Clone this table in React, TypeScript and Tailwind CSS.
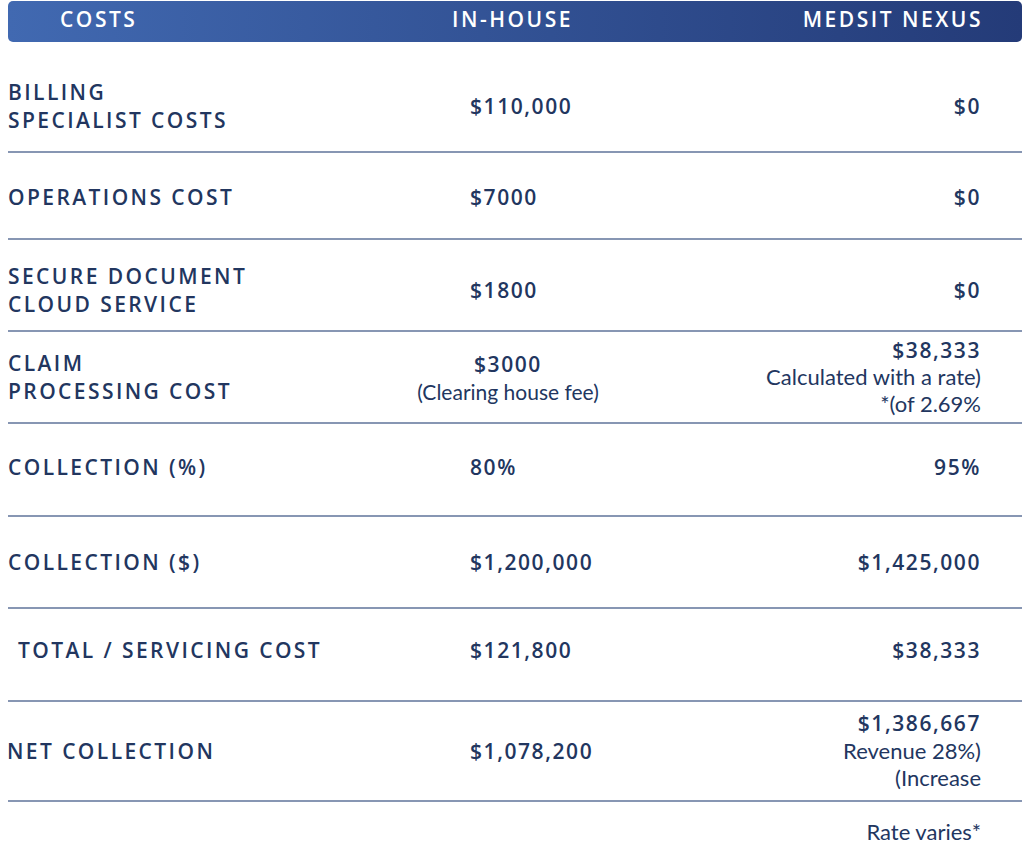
import React from 'react';

const navy = 'text-[#22365f]';

type Row = {
  label: React.ReactNode;
  inHouse: React.ReactNode;
  nexus: React.ReactNode;
  h: string;
};

const Label: React.FC<{ children: React.ReactNode; className?: string }> = ({ children, className = '' }) => (
  <div className={`font-['Open_Sans',sans-serif] text-[21px] font-semibold tracking-[0.115em] leading-[28px] ${navy} ${className}`}>
    {children}
  </div>
);

const Value: React.FC<{ children: React.ReactNode; className?: string }> = ({ children, className = 'leading-[28px]' }) => (
  <div className={`font-['Open_Sans',sans-serif] text-[21px] font-semibold tracking-[0.075em] ${className} ${navy}`}>
    {children}
  </div>
);

const Note: React.FC<{ children: React.ReactNode }> = ({ children }) => (
  <div className={`font-['Lato',sans-serif] text-[22px] leading-[27px] ${navy}`}>{children}</div>
);

const rows: Row[] = [
  {
    label: <Label>BILLING<br />SPECIALIST COSTS</Label>,
    inHouse: <Value>$110,000</Value>,
    nexus: <Value>$0</Value>,
    h: 'h-[111px] pt-[19px]',
  },
  {
    label: <Label>OPERATIONS COST</Label>,
    inHouse: <Value>$7000</Value>,
    nexus: <Value>$0</Value>,
    h: 'h-[87px] pt-[2px]',
  },
  {
    label: <Label>SECURE DOCUMENT<br />CLOUD SERVICE</Label>,
    inHouse: <Value>$1800</Value>,
    nexus: <Value>$0</Value>,
    h: 'h-[92px] pt-[9px]',
  },
  {
    label: <Label>CLAIM<br />PROCESSING COST</Label>,
    inHouse: (
      <div className="-ml-[62px] w-[200px] flex flex-col items-center pt-[2px]">
        <Value className="leading-[27px]">$3000</Value>
        <div className={`font-['Lato',sans-serif] text-[21px] leading-[27px] ${navy}`}>(Clearing house fee)</div>
      </div>
    ),
    nexus: (
      <div className="flex flex-col items-end">
        <Value className="leading-[26px]">$38,333</Value>
        <Note>Calculated with a rate)</Note>
        <Note>*(of 2.69%</Note>
      </div>
    ),
    h: 'h-[92px]',
  },
  {
    label: <Label>COLLECTION (%)</Label>,
    inHouse: <Value>80%</Value>,
    nexus: <Value>95%</Value>,
    h: 'h-[93px] pb-[5px]',
  },
  {
    label: <Label>COLLECTION ($)</Label>,
    inHouse: <Value>$1,200,000</Value>,
    nexus: <Value>$1,425,000</Value>,
    h: 'h-[92px]',
  },
  {
    label: <Label className="pl-[10px]">TOTAL / SERVICING COST</Label>,
    inHouse: <Value>$121,800</Value>,
    nexus: <Value>$38,333</Value>,
    h: 'h-[93px] pb-[9px]',
  },
  {
    label: <Label className="-ml-[1px]">NET COLLECTION</Label>,
    inHouse: <Value>$1,078,200</Value>,
    nexus: (
      <div className="flex flex-col items-end pb-[3px]">
        <Value>$1,386,667</Value>
        <Note>Revenue 28%)</Note>
        <Note>(Increase</Note>
      </div>
    ),
    h: 'h-[100px]',
  },
];

export default function App() {
  return (
    <div className="w-[1024px] h-[846px] bg-white pl-[8px] pr-[2px] pt-[1px]">
      <div className="h-[41px] pb-[3px] rounded-[5px] bg-gradient-to-r from-[#4169b1] to-[#243b78] grid grid-cols-[444px_1fr_auto] items-center pr-[41px] font-['Open_Sans',sans-serif] text-[21px] font-semibold tracking-[0.12em] text-white">
        <div className="pl-[52px]">COSTS</div>
        <div>IN-HOUSE</div>
        <div className="-mr-[2px]">MEDSIT NEXUS</div>
      </div>
      {rows.map((r, i) => (
        <div
          key={i}
          className={`${r.h} grid grid-cols-[462px_1fr_auto] items-center border-b-2 border-[#8796b3] pr-[41px]`}
        >
          <div>{r.label}</div>
          <div>{r.inHouse}</div>
          <div className="text-right">{r.nexus}</div>
        </div>
      ))}
      <div className="flex justify-end pr-[41px] pt-[16px]">
        <Note>Rate varies*</Note>
      </div>
    </div>
  );
}
